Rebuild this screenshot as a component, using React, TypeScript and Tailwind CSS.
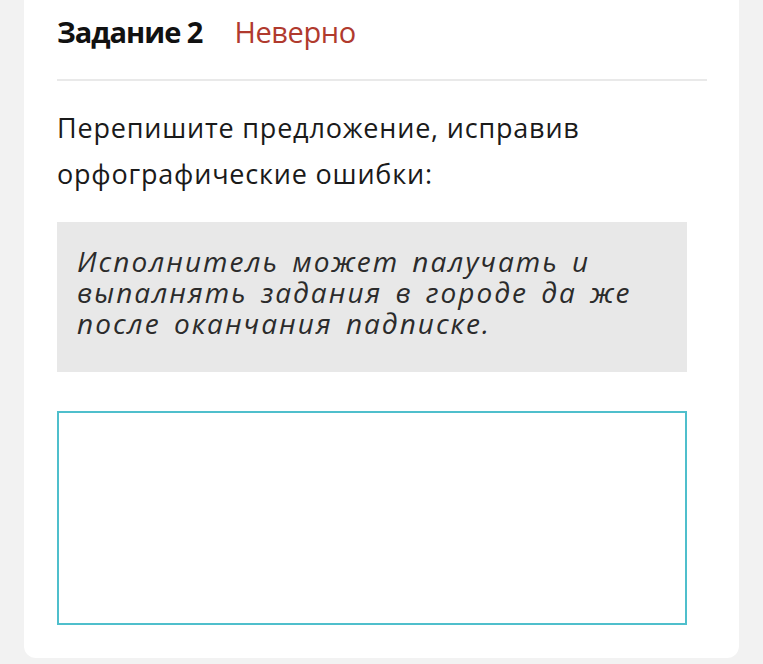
import React from "react";

export default function App() {
  return (
    <div className="w-[763px] h-[664px] bg-[#f2f2f2] overflow-hidden" style={{ fontFamily: '"Open Sans", "Noto Sans", sans-serif' }}>
      <div className="ml-[24px] w-[715px] bg-white rounded-b-[12px] pt-[14px] pb-[33px] pl-[33px] pr-[32px]">
        <div className="flex items-center h-[36px] text-[29px] leading-[36px]">
          <span className="font-bold text-[#111111] tracking-[-1px]">Задание 2</span>
          <span className="ml-[32px] text-[#b03a2e] tracking-[-0.4px]">Неверно</span>
        </div>
        <div className="mt-[29px] h-[2px] bg-[#e9e9e9]" />
        <p className="mt-[24px] text-[27px] leading-[46px] tracking-[0.8px] text-[#1a1a1a]">
          Перепишите предложение, исправив
          <br />
          орфографические ошибки:
        </p>
        <div className="mt-[25px] w-[630px] h-[150px] bg-[#e8e8e8] pt-[24px] pl-[20px]">
          <div className="italic text-[28px] leading-[31px] tracking-[2px] [word-spacing:4px] text-[#2b2b2b] whitespace-nowrap" style={{ fontFamily: '"Open Sans", sans-serif' }}>
            <div className="h-[31px]">Исполнитель может палучать и</div>
            <div className="h-[31px]">выпалнять задания в городе да же</div>
            <div className="h-[31px]">после оканчания падписке.</div>
          </div>
        </div>
        <div className="mt-[39px] w-[630px] h-[214px] border-2 border-[#4fbfcc] bg-white" />
      </div>
    </div>
  );
}
